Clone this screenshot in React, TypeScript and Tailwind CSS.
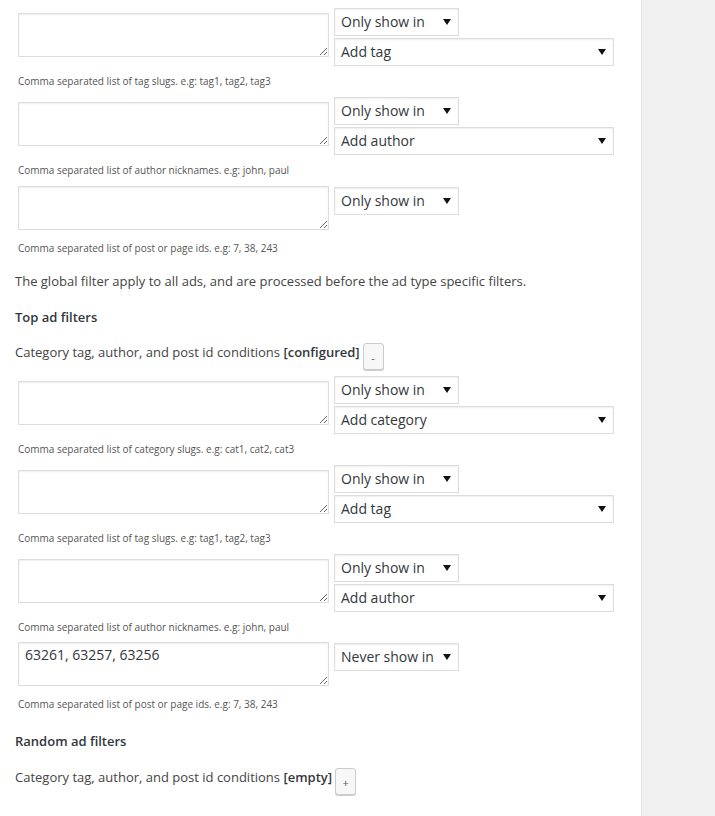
import React from "react";

const font = { fontFamily: '"Open Sans", "Noto Sans", sans-serif' };

function Arrow() {
  return (
    <svg width="8" height="7" viewBox="0 0 8 7" className="absolute top-1/2 -translate-y-1/2 right-[7px]">
      <path d="M0 0.5 H8 L4 6.5 Z" fill="#111" />
    </svg>
  );
}

function Select({ label, wide }: { label: string; wide?: boolean }) {
  return (
    <div
      className={`relative h-[28px] border border-[#ddd] bg-white shadow-[inset_0_1px_2px_rgba(0,0,0,0.07)] text-[14px] leading-[26px] text-[#32373c] pl-[6px] ${
        wide ? "w-[280px]" : "w-[125px]"
      }`}
    >
      {label}
      <Arrow />
    </div>
  );
}

function Area({ value, className = "" }: { value?: string; className?: string }) {
  return (
    <textarea
      readOnly
      defaultValue={value ?? ""}
      className={`block w-[311px] h-[44px] shrink-0 border border-[#ddd] bg-white shadow-[inset_0_1px_2px_rgba(0,0,0,0.07)] text-[14px] leading-[20px] text-[#32373c] px-[6px] py-[2px] outline-none ${className}`}
      style={font}
    />
  );
}

function Help({ text, className = "" }: { text: string; className?: string }) {
  return <p className={`ml-[3px] text-[10px] leading-[14px] text-[#555] ${className}`}>{text}</p>;
}

function DoubleRow({ add, help }: { add: string; help: string }) {
  return (
    <div className="mb-[9px]">
      <div className="ml-[3px] flex gap-[5px]">
        <Area className="mt-[5px]" />
        <div className="flex flex-col gap-[2px]">
          <Select label="Only show in" />
          <Select label={add} wide />
        </div>
      </div>
      <Help text={help} className="mt-[8px]" />
    </div>
  );
}

function IdRow({ mode, value, className = "" }: { mode: string; value?: string; className?: string }) {
  return (
    <div className={className}>
      <div className="ml-[3px] flex gap-[5px]">
        <Area value={value} />
        <div className="mt-[1px]">
          <Select label={mode} />
        </div>
      </div>
      <Help text="Comma separated list of post or page ids. e.g: 7, 38, 243" className="mt-[11px]" />
    </div>
  );
}

function SmallButton({ sign }: { sign: string }) {
  return (
    <div className="mt-[1px] ml-[3px] w-[21px] h-[27px] rounded-[3px] border border-[#ccc] bg-[#f7f7f7] shadow-[0_1px_0_#ccc] text-[11px] leading-none text-[#555] flex items-end justify-center pb-[6px]">
      {sign}
    </div>
  );
}

export default function App() {
  return (
    <div className="flex min-h-screen w-full bg-white" style={font}>
      <div className="w-[641px] shrink-0 pl-[15px] pt-[8px] text-[13px] text-[#444]">
        <DoubleRow add="Add tag" help="Comma separated list of tag slugs. e.g: tag1, tag2, tag3" />
        <DoubleRow add="Add author" help="Comma separated list of author nicknames. e.g: john, paul" />
        <IdRow mode="Only show in" />

        <p className="mt-[16px] leading-[20px]">
          The global filter apply to all ads, and are processed before the ad type specific filters.
        </p>
        <h3 className="mt-[16px] leading-[20px] font-semibold text-[#32373c]">Top ad filters</h3>

        <div className="mt-[15px] mb-[6px] flex items-start">
          <span className="leading-[20px]">
            Category tag, author, and post id conditions <b className="font-semibold text-[#32373c]">[configured]</b>
          </span>
          <SmallButton sign="-" />
        </div>

        <DoubleRow add="Add category" help="Comma separated list of category slugs. e.g: cat1, cat2, cat3" />
        <DoubleRow add="Add tag" help="Comma separated list of tag slugs. e.g: tag1, tag2, tag3" />
        <DoubleRow add="Add author" help="Comma separated list of author nicknames. e.g: john, paul" />
        <IdRow mode="Never show in" value="63261, 63257, 63256" className="-mt-[1px]" />

        <h3 className="mt-[20px] leading-[20px] font-semibold text-[#32373c]">Random ad filters</h3>
        <div className="mt-[16px] flex items-start">
          <span className="leading-[20px]">
            Category tag, author, and post id conditions <b className="font-semibold text-[#32373c]">[empty]</b>
          </span>
          <SmallButton sign="+" />
        </div>
      </div>
      <div className="flex-1 border-l border-[#e5e5e5] bg-[#f1f1f1]" />
    </div>
  );
}
